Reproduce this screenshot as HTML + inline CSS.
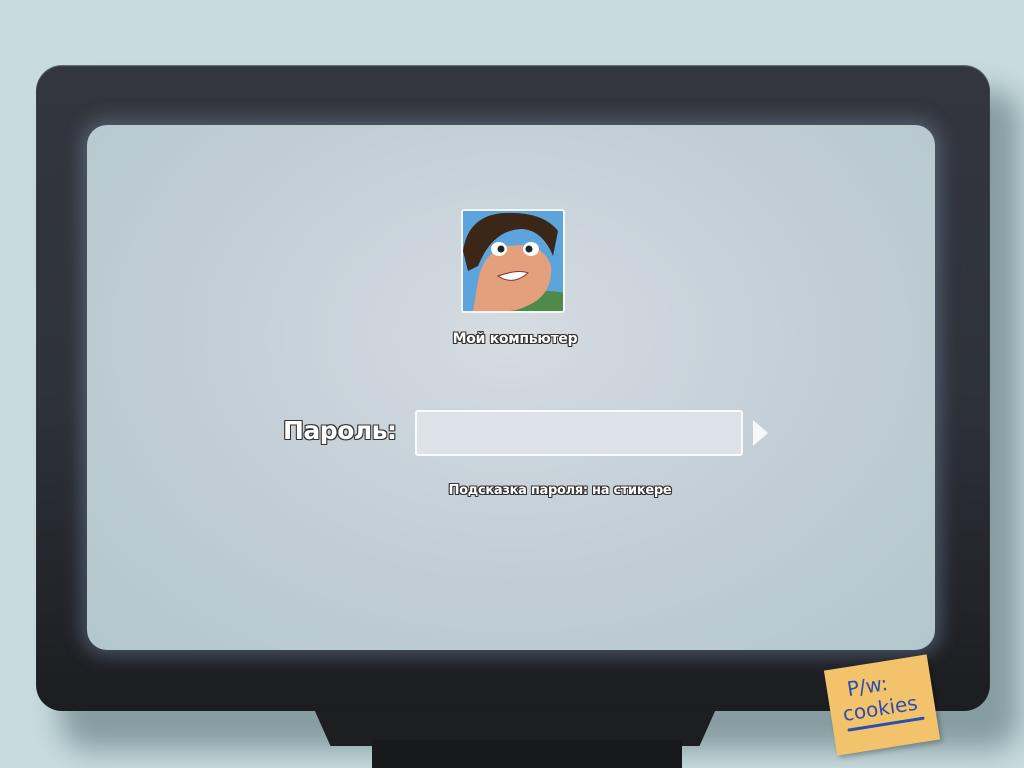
<!DOCTYPE html>
<html><head><meta charset="utf-8"><style>
html,body{margin:0;padding:0;width:1024px;height:768px;overflow:hidden;background:#c8dcdf;font-family:"DejaVu Sans","Liberation Sans",sans-serif}
.abs{position:absolute}
.shadow{left:60px;top:90px;width:960px;height:660px;border-radius:30px;background:rgba(80,105,110,.55);filter:blur(14px)}
.stand1{left:310px;top:700px;width:410px;height:46px;background:#1d1e22;clip-path:polygon(0 0,100% 0,95% 100%,5% 100%)}
.stand2{left:372px;top:740px;width:310px;height:28px;background:#18191c}
.bezel{left:36px;top:65px;width:954px;height:646px;border-radius:26px;background:linear-gradient(180deg,#33363d 0%,#2e323a 50%,#1c1d21 100%);box-shadow:inset 0 1px 1px rgba(255,255,255,.3)}
.screen{left:87px;top:125px;width:848px;height:525px;border-radius:20px;background:radial-gradient(ellipse at 50% 40%,#d5dce2 0%,#c3ced6 50%,#b2c7cc 100%);box-shadow:0 0 18px 6px rgba(120,140,170,.45)}
.t{color:#fff;font-weight:bold;text-shadow:-1px -1px 0 #333,1px -1px 0 #333,-1px 1px 0 #333,1px 1px 0 #333,0 1px 0 #333,0 -1px 0 #333,1px 0 0 #333,-1px 0 0 #333}
</style></head><body>
<div class="abs shadow"></div>
<div class="abs stand1"></div>
<div class="abs stand2"></div>
<div class="abs bezel"></div>
<div class="abs screen"></div>
<div class="abs" style="left:461px;top:209px;width:100px;height:100px;border:2px solid #f4f6f8;border-radius:3px;overflow:hidden;background:#5fa0d8">
<svg width="100" height="100" viewBox="0 0 100 100">
<rect width="100" height="100" fill="#5da3dc"/>
<ellipse cx="85" cy="100" rx="40" ry="20" fill="#4f8a4a"/>
<path d="M10 100 L15 70 Q20 40 45 35 Q80 30 88 55 Q90 80 70 92 Q55 100 45 100Z" fill="#e4a07c"/>
<path d="M0 40 Q5 5 40 2 Q80 0 95 20 L90 45 Q80 20 60 18 Q30 18 15 55 L5 60Z" fill="#3b2618"/>
<ellipse cx="36" cy="38" rx="8" ry="7" fill="#fff"/><circle cx="38" cy="38" r="3.5" fill="#222"/>
<ellipse cx="68" cy="38" rx="8" ry="7" fill="#fff"/><circle cx="66" cy="38" r="3.5" fill="#222"/>
<path d="M35 65 Q50 75 65 62 Q55 58 35 65Z" fill="#fff" stroke="#7a3a2a"/>
</svg></div>
<div class="abs t" style="left:395px;top:331px;width:240px;text-align:center;font-size:14px;letter-spacing:-0.3px">Мой компьютер</div>
<div class="abs t" style="left:283px;top:416px;font-size:25px;letter-spacing:-0.5px">Пароль:</div>
<div class="abs" style="left:415px;top:410px;width:324px;height:42px;border:2px solid #fafbfc;border-radius:3px;background:#dde2e9"></div>
<div class="abs" style="left:753px;top:420px;width:0;height:0;border-top:13px solid transparent;border-bottom:13px solid transparent;border-left:15px solid #f6f7f9"></div>
<div class="abs t" style="left:400px;top:483px;width:320px;text-align:center;font-size:13px;letter-spacing:-0.3px">Подсказка пароля: на стикере</div>
<div class="abs" style="left:830px;top:662px;width:104px;height:86px;background:#f3c36c;transform:rotate(-9deg);box-shadow:2px 3px 5px rgba(0,0,0,.25);font-family:'DejaVu Sans',sans-serif;color:#2b4fb0;font-size:20px;line-height:24px;padding:0 0 0 12px;box-sizing:border-box">
<div style="margin-top:10px;margin-left:8px">P/w:</div>
<div>cookies</div>
<div style="width:78px;height:3px;background:#2b4fb0;margin-top:3px;margin-left:2px;border-radius:2px"></div>
</div>
</body></html>
